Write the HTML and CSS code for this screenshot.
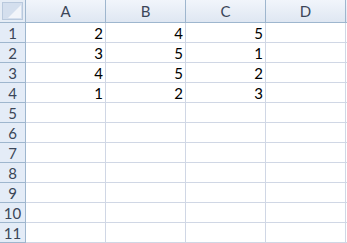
FILE: index.html
```html
<!DOCTYPE html>
<html lang="en">
<head>
  <meta charset="UTF-8" />
  <title>Sheet1</title>
  <link rel="stylesheet" href="styles.css">
</head>
<body>
  <!-- Worksheet grid -->
  <table class="sheet">
    <thead>
      <tr>
        <th class="corner"><span class="corner-tri"></span></th>
        <th class="col-head">A</th>
        <th class="col-head">B</th>
        <th class="col-head">C</th>
        <th class="col-head">D</th>
        <th class="spill"></th>
      </tr>
    </thead>
    <tbody>
      <tr><th class="row-head">1</th><td>2</td><td>4</td><td>5</td><td></td><td class="spill"></td></tr>
      <tr><th class="row-head">2</th><td>3</td><td>5</td><td>1</td><td></td><td class="spill"></td></tr>
      <tr><th class="row-head">3</th><td>4</td><td>5</td><td>2</td><td></td><td class="spill"></td></tr>
      <tr><th class="row-head">4</th><td>1</td><td>2</td><td>3</td><td></td><td class="spill"></td></tr>
      <tr><th class="row-head">5</th><td></td><td></td><td></td><td></td><td class="spill"></td></tr>
      <tr><th class="row-head">6</th><td></td><td></td><td></td><td></td><td class="spill"></td></tr>
      <tr><th class="row-head">7</th><td></td><td></td><td></td><td></td><td class="spill"></td></tr>
      <tr><th class="row-head">8</th><td></td><td></td><td></td><td></td><td class="spill"></td></tr>
      <tr><th class="row-head">9</th><td></td><td></td><td></td><td></td><td class="spill"></td></tr>
      <tr><th class="row-head">10</th><td></td><td></td><td></td><td></td><td class="spill"></td></tr>
      <tr><th class="row-head">11</th><td></td><td></td><td></td><td></td><td class="spill"></td></tr>
    </tbody>
  </table>
</body>
</html>
```

FILE: styles.css
```css
body {
  margin: 0;
  padding: 0;
  background-color: #ffffff;
  overflow: hidden;
  font-family: Lato, "Open Sans", sans-serif;
}

.sheet {
  border-collapse: separate;
  border-spacing: 0;
  table-layout: fixed;
  width: 347px;
}

.sheet th,
.sheet td {
  padding: 0;
  border-right: 1px solid #d0d7e5;
  border-bottom: 1px solid #d0d7e5;
  font-size: 15px;
  font-weight: normal;
  overflow: hidden;
  white-space: nowrap;
}

.sheet thead th {
  height: 22px;
  background: linear-gradient(#f1f5fb, #dfe7f2);
  border-right-color: #9eb6ce;
  border-bottom-color: #9eb6ce;
  color: #3b4658;
  text-align: center;
}

.sheet .corner {
  width: 25px;
  position: relative;
  background: #d4dfee;
  box-shadow: inset 0 0 0 2px #e6edf6, inset 0 0 0 3px #b9c9dd;
}

.corner-tri {
  position: absolute;
  right: 4px;
  bottom: 4px;
  width: 13px;
  height: 13px;
  background: #f2f5fa;
  clip-path: polygon(100% 0, 100% 100%, 0 100%);
}

.col-head {
  width: 79px;
}

.sheet .spill {
  width: auto;
  border-right: none;
}

.sheet .row-head {
  height: 19px;
  background-color: #e4ecf7;
  border-right-color: #9eb6ce;
  border-bottom-color: #9eb6ce;
  color: #3b4658;
  text-align: center;
}

.sheet td {
  text-align: right;
  padding-right: 2px;
  color: #000000;
}

.sheet td.spill {
  padding-right: 0;
}
```
